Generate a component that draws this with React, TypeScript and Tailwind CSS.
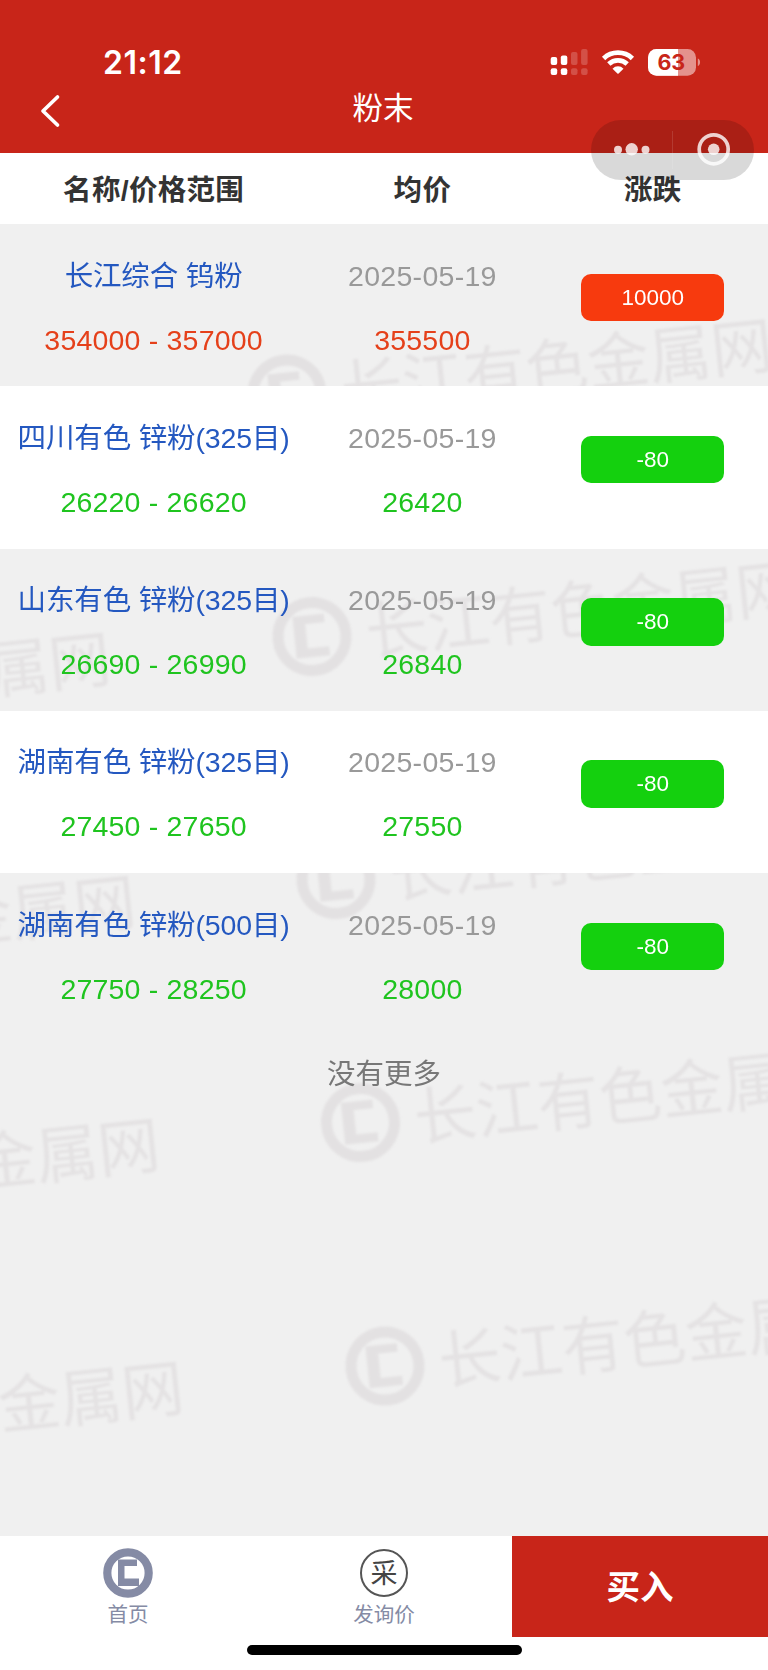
import React from 'react'

type Quote = {
  name: string
  range: string
  date: string
  average: string
  change: string
  up: boolean
}

const quotes: Quote[] = [
  { name: '长江综合 钨粉', range: '354000 - 357000', date: '2025-05-19', average: '355500', change: '10000', up: true },
  { name: '四川有色 锌粉(325目)', range: '26220 - 26620', date: '2025-05-19', average: '26420', change: '-80', up: false },
  { name: '山东有色 锌粉(325目)', range: '26690 - 26990', date: '2025-05-19', average: '26840', change: '-80', up: false },
  { name: '湖南有色 锌粉(325目)', range: '27450 - 27650', date: '2025-05-19', average: '27550', change: '-80', up: false },
  { name: '湖南有色 锌粉(500目)', range: '27750 - 28250', date: '2025-05-19', average: '28000', change: '-80', up: false },
]

// origin of every watermark, relative to the top of the list
const marks = [
  [287, 170],
  [312, 412.5],
  [336, 655.5],
  [360.5, 898.5],
  [385, 1142],
  [-375, 484],
  [-350, 727],
  [-326, 970],
  [-302, 1213],
]

const Watermark = () => {
  return (
    <svg className="absolute inset-0 -z-10 h-full w-full" aria-hidden="true">
      <filter id="soft">
        <feGaussianBlur stdDeviation="1.2" />
      </filter>
      <g filter="url(#soft)" fill="#e3e1e2" stroke="none">
        {marks.map(([x, y]) => (
          <g key={`${x}-${y}`} transform={`translate(${x} ${y}) rotate(-6)`}>
            <circle r="34" fill="none" stroke="#e3e1e2" strokeWidth="11" />
            <path d="M-17.5 -21.500H14V-13H-5.500V11.500H16V20.500H-17.500Z" />
            <text x="54" y="24" fontSize="62" fill="#e4e2e3">
              长江有色金属网
            </text>
          </g>
        ))}
      </g>
    </svg>
  )
}

const StatusBar = () => {
  return (
    <div className="flex h-[88px] items-start justify-between pl-[103px] pr-[67px] pt-[43px]">
      <p className="font-['Inter'] text-[32px] leading-[40px] font-semibold tracking-[0.5px]">21:12</p>
      <svg width="151" height="30" viewBox="550 47 151 30" className="mt-1" fill="#fff">
        <rect x="550.7" y="57" width="6.5" height="8" rx="2" />
        <rect x="560.8" y="55.5" width="6.5" height="9.5" rx="2" />
        <rect x="571" y="52" width="6.5" height="13" rx="2" opacity=".2" />
        <rect x="581.1" y="49" width="6.5" height="16" rx="2" opacity=".2" />
        <rect x="550.7" y="68.3" width="6.5" height="6.8" rx="2" />
        <rect x="560.8" y="68.3" width="6.5" height="6.8" rx="2" />
        <rect x="571" y="68.3" width="6.5" height="6.8" rx="2" opacity=".2" />
        <rect x="581.1" y="68.3" width="6.5" height="6.8" rx="2" opacity=".2" />
        <g fill="none" stroke="#fff" strokeWidth="4.8">
          <path d="M603.6 58.4a21 21 0 0 1 28.800 0" />
          <path d="M608.8 64a13.500 13.500 0 0 1 18.400 0" />
        </g>
        <path d="M618.600 73.600a.9 .9 0 0 1-1.200 0l-4.900-4.900a7.600 7.600 0 0 1 11 0z" />
        <clipPath id="charge">
          <rect x="648" y="49" width="30" height="27" />
        </clipPath>
        <rect x="648" y="49" width="48" height="26.7" rx="8.5" opacity=".5" />
        <rect x="648" y="49" width="48" height="26.7" rx="8.5" clipPath="url(#charge)" />
        <path d="M697.8 58.5c3 1.2 3 6.4 0 7.6z" opacity=".5" />
        <text x="671.3" y="70" textAnchor="middle" fontSize="21.5" fontWeight="700" fill="#c82519" className="font-['Inter']">
          63
        </text>
      </svg>
    </div>
  )
}

const Capsule = () => {
  return (
    <div className="absolute left-[591px] top-[120px] h-[60px] w-[163px] rounded-full bg-black/15">
      <svg width="163" height="60" viewBox="591 120 163 60" fill="#fff" fillOpacity=".8">
        <circle cx="618" cy="149.7" r="4" />
        <circle cx="631.7" cy="149.3" r="6.2" />
        <circle cx="645.5" cy="149.7" r="4" />
        <path d="M672.5 131V169" stroke="#fff" strokeOpacity=".12" />
        <circle cx="713.7" cy="149.3" r="14.5" fill="none" stroke="#fff" strokeOpacity=".8" strokeWidth="3.7" />
        <circle cx="713.7" cy="149.3" r="5.8" />
      </svg>
    </div>
  )
}

const Row = ({ quote, striped }: { quote: Quote; striped: boolean }) => {
  return (
    <div className={`flex h-[162.25px] text-center ${striped ? '' : 'bg-white'}`}>
      <div className="w-[40%] pt-[31.5px]">
        <p className="leading-10 tracking-[-0.15px] whitespace-nowrap text-[#2458c0]">{quote.name}</p>
        <p className={`mt-6 leading-10 tracking-[0.2px] ${quote.up ? 'text-[#e5401a]' : 'text-[#1fc41f]'}`}>{quote.range}</p>
      </div>
      <div className="w-[30%] pt-[31.5px]">
        <p className="leading-10 tracking-[0.3px] text-[#999]">{quote.date}</p>
        <p className={`mt-6 leading-10 tracking-[0.2px] ${quote.up ? 'text-[#e5401a]' : 'text-[#1fc41f]'}`}>{quote.average}</p>
      </div>
      <div className="flex w-[30%] justify-center pt-[49.5px]">
        <p
          className={`h-[47.5px] w-[143.4px] rounded-[10px] text-[22.5px] leading-[47.5px] text-white ${
            quote.up ? 'bg-[#f73a0e]' : 'bg-[#14d00e]'
          }`}
        >
          {quote.change}
        </p>
      </div>
    </div>
  )
}

const App = () => {
  return (
    <div className="relative flex h-[1670px] w-[768px] flex-col overflow-hidden bg-white font-['Liberation_Sans','Noto_Sans_CJK_SC',sans-serif] text-[28.5px]">
      <header className="h-[153px] bg-[#c82519] text-white">
        <StatusBar />
        <div className="flex h-10 items-center px-10">
          <svg width="22" height="34" viewBox="0 0 22 34" className="mt-[6px]" fill="none" stroke="#fff" strokeWidth="3.7" strokeLinecap="round" strokeLinejoin="round">
            <path d="M17.5 3L3 17L17.5 31" />
          </svg>
          <h1 className="flex-1 pr-6 text-center text-[30.5px] leading-10">粉末</h1>
        </div>
      </header>

      <div className="flex h-[71px] items-center bg-white pt-[3px] text-center font-bold tracking-[0.3px] text-[#333]">
        <p className="w-[40%]">名称/价格范围</p>
        <p className="w-[30%]">均价</p>
        <p className="w-[30%]">涨跌</p>
      </div>

      <main className="relative isolate flex-1 overflow-hidden bg-[#f0f0f0]">
        <Watermark />
        {quotes.map((quote, index) => (
          <Row key={quote.name} quote={quote} striped={index % 2 === 0} />
        ))}
        <p className="pt-[19px] text-center leading-10 text-[#777]">没有更多</p>
      </main>

      <footer className="h-[134px] bg-white">
        <div className="flex h-[101px] text-center text-[20.5px] text-[#858ba5]">
          <div className="flex w-1/3 flex-col items-center pt-3">
            <svg width="50" height="50" viewBox="0 0 50 50" fill="#858ba5">
              <circle cx="25" cy="25" r="20.7" fill="none" stroke="#858ba5" strokeWidth="8.2" />
              <path d="M15 11.5H34V18H21.5V30.5H36V38H15Z" />
            </svg>
            <p className="mt-[3px] leading-7">首页</p>
          </div>
          <div className="flex w-1/3 flex-col items-center pt-[13px]">
            <div className="flex h-12 w-12 items-center justify-center rounded-full border-2 border-[#555] pt-0.5 text-[27px] leading-none text-[#444]">
              采
            </div>
            <p className="mt-1 leading-7">发询价</p>
          </div>
          <button className="w-1/3 bg-[#c82519] pt-1 text-[33.5px] font-bold text-white">买入</button>
        </div>
        <div className="mx-auto mt-2 h-[9.5px] w-[275px] rounded-full bg-black" />
      </footer>

      <Capsule />
    </div>
  )
}

export default App
